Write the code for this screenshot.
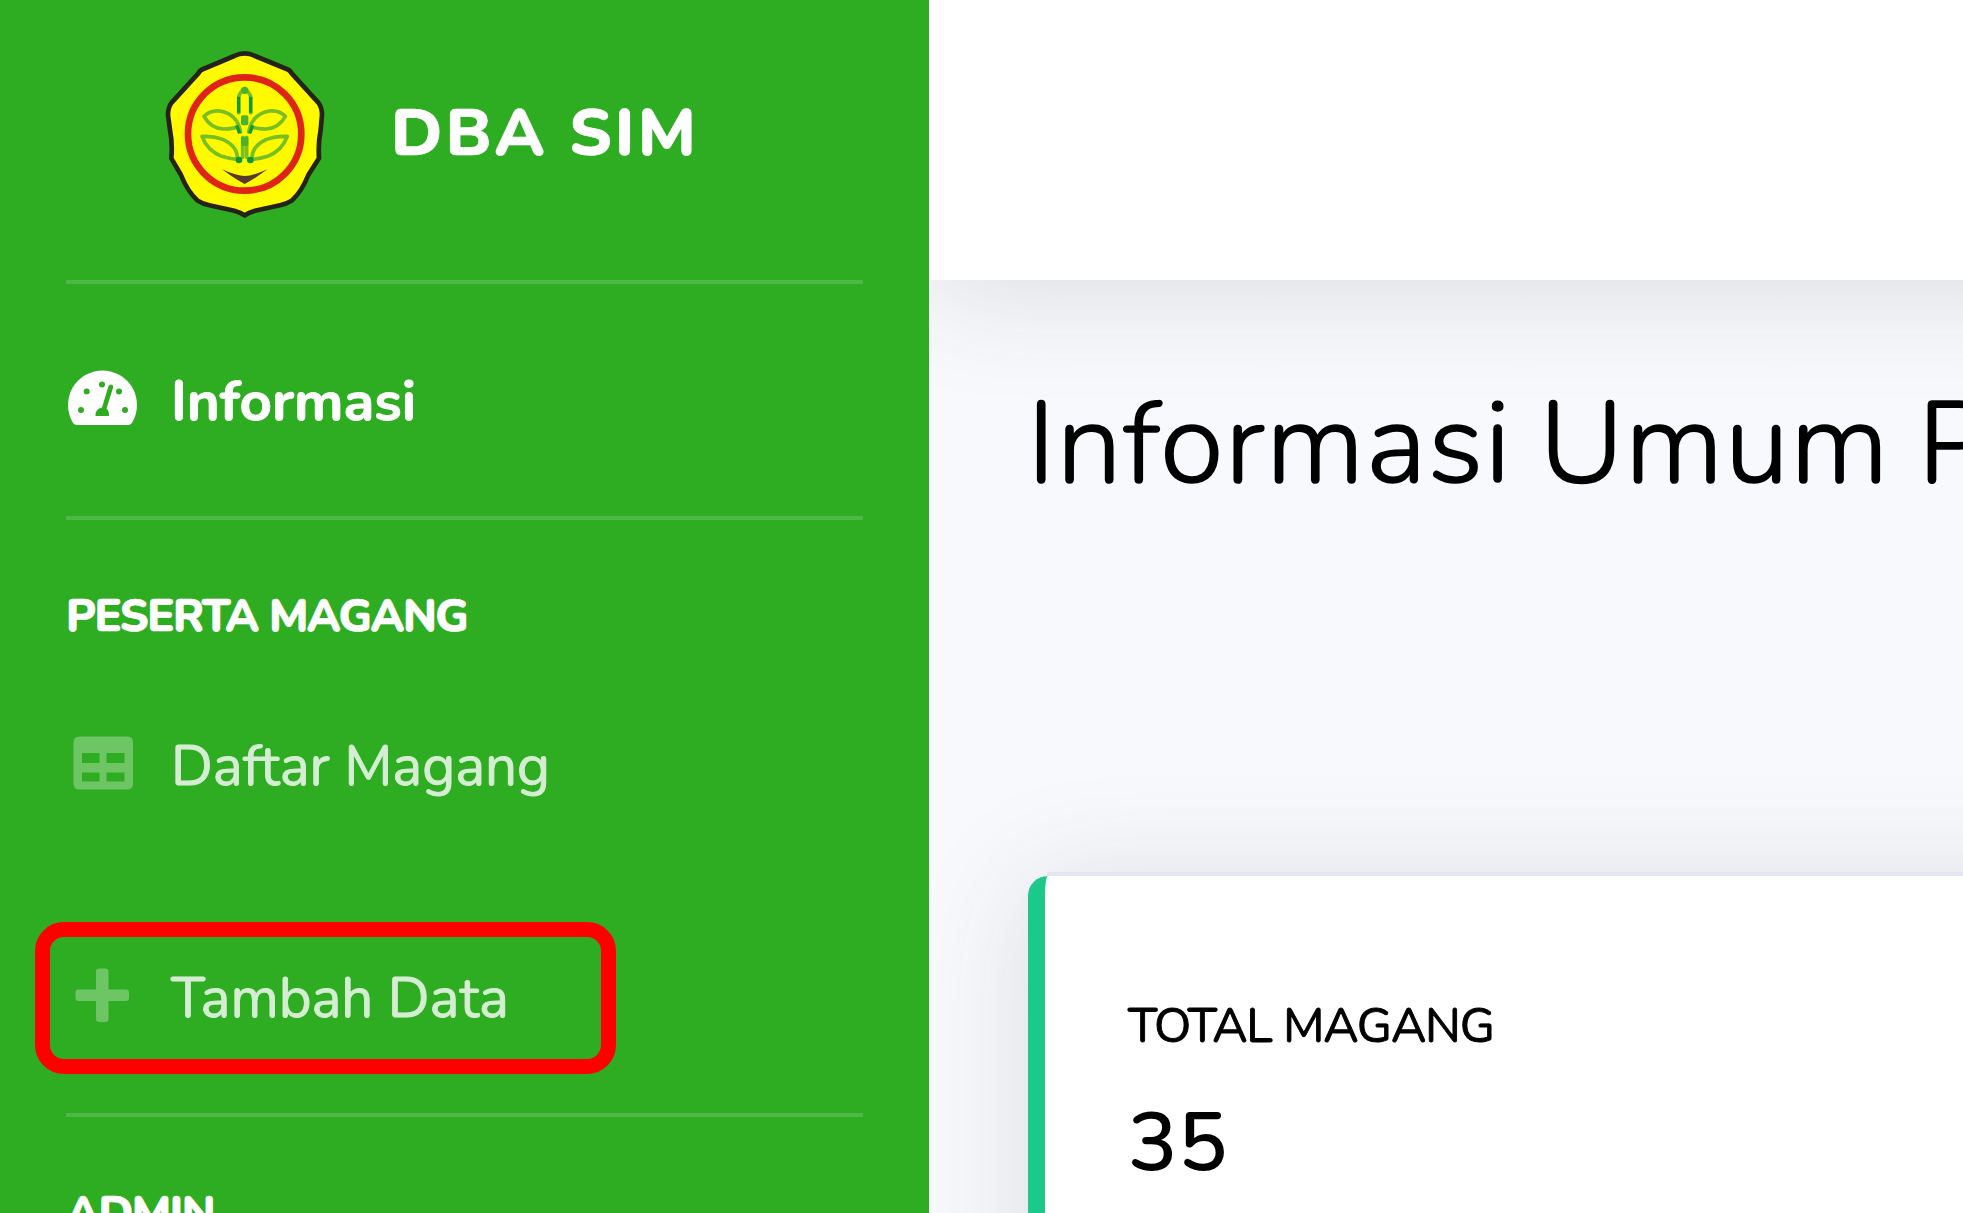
<div class="app">
  <aside class="sidebar">
    <div class="brand">
      <svg class="logo" viewBox="0 0 660 630" aria-hidden="true">
        <path
          d="M314 70 Q330 70 345 78 L440 117 Q450 120 455 130 L535 218 Q546 232 546 255 L542 300 Q534 340 537 385 L505 435 Q485 485 455 512 Q440 522 420 526 L345 542 Q325 548 314 556 Q303 548 283 542 L208 526 Q188 522 173 512 Q143 485 123 435 L94 385 Q98 340 90 300 L84 255 Q84 232 95 218 L175 130 Q180 120 190 117 L283 78 Q298 70 314 70Z"
          fill="#fffa00" stroke="#25221a" stroke-width="14" stroke-linejoin="round" />
        <circle cx="314" cy="312" r="170" fill="none" stroke="#df2417" stroke-width="20" />
        <g fill="none" stroke="#77bf22" stroke-width="11" stroke-linejoin="round" stroke-linecap="round">
          <path d="M296 248 V202 Q297 190 314 176 Q331 190 332 202 V248" />
          <path d="M302 306 Q292 252 240 243 Q210 240 192 259 Q212 295 250 297 Q280 297 292 290" />
          <path d="M326 306 Q336 252 388 243 Q418 240 436 259 Q416 295 378 297 Q348 297 336 290" />
          <path d="M292 388 Q294 350 250 329 Q222 318 186 319 Q202 362 245 379 Q270 387 292 388" />
          <path d="M336 388 Q334 350 378 329 Q406 318 442 319 Q426 362 383 379 Q358 387 336 388" />
          <path d="M308 322 V382 M320 322 V382" />
        </g>
        <g fill="none" stroke="#0f9a3c" stroke-width="10">
          <path d="M296 248 V200 M332 248 V200 M290 286 L299 310 M338 286 L329 310" />
        </g>
        <g fill="#4bb22c">
          <circle cx="314" cy="181" r="11" />
          <rect x="303" y="256" width="22" height="30" rx="6" />
          <rect x="303" y="320" width="22" height="28" rx="6" />
          <circle cx="297" cy="390" r="10" fill="#0b9a35" />
          <circle cx="331" cy="390" r="10" fill="#0b9a35" />
        </g>
        <path d="M246 418 Q290 438 314 438 Q338 438 382 418 Q345 446 314 462 Q283 446 246 418Z" fill="#5b3a2c" />
      </svg>
      <span class="name">DBA SIM</span>
    </div>
    <hr />
    <a class="item active" href="#informasi">
      <svg viewBox="66 368 104 68" aria-hidden="true">
        <path d="M77 425 Q74 425 72.500 422 A34.500 34.500 0 1 1 132.500 422 Q131 425 128 425Z" fill="#fff" />
        <g fill="#2eac22">
          <circle cx="86.700" cy="391.500" r="3" />
          <circle cx="102" cy="384.500" r="3" />
          <circle cx="119" cy="391.500" r="3" />
          <circle cx="81" cy="410" r="3" />
          <circle cx="125" cy="410" r="3" />
          <path d="M95.500 416 Q95 409 102 407.500 L108.500 386 Q110 383.500 112.500 385 Q113.500 386 113 388 L106.500 408.500 Q109.500 411 109 416Z" />
        </g>
      </svg>
      <span>Informasi</span>
    </a>
    <hr />
    <div class="heading">PESERTA MAGANG</div>
    <a class="item" href="#daftar">
      <svg viewBox="66 736 104 61" aria-hidden="true">
        <path
          fill-rule="evenodd"
          fill="rgba(255,255,255,.3)"
          d="M79.500 736.500H127.500Q133 736.500 133 742.500V783.500Q133 789.500 127.500 789.500H79.500Q73.500 789.500 73.500 783.500V742.500Q73.500 736.500 79.500 736.500Z M82 753V763H99.500V753Z M106.500 753V763H124.500V753Z M82 772.500V781.500H99.500V772.500Z M106.500 772.500V781.500H124.500V772.500Z" />
      </svg>
      <span>Daftar Magang</span>
    </a>
    <a class="item add" href="#tambah">
      <svg viewBox="66 966 104 66" aria-hidden="true">
        <path
          fill="rgba(255,255,255,.3)"
          d="M99 968.500H105.500Q108.500 968.500 108.500 971.500V989.500H126Q129 989.500 129 992.500V998Q129 1001 126 1001H108.500V1019Q108.500 1022 105.500 1022H99Q96 1022 96 1019V1001H78.500Q75.500 1001 75.500 998V992.500Q75.500 989.500 78.500 989.500H96V971.500Q96 968.500 99 968.500Z" />
      </svg>
      <span>Tambah Data</span>
      <i class="marker"></i>
    </a>
    <hr />
    <div class="heading">ADMIN</div>
  </aside>

  <main>
    <header></header>
    <h1>Informasi Umum P</h1>
    <section class="card">
      <div class="label">TOTAL MAGANG</div>
      <div class="value">35</div>
    </section>
  </main>
</div>

<style>
  :global(body) {
    overflow: hidden;
  }
  .app {
    display: flex;
    width: 100vw;
    height: 100vh;
    overflow: hidden;
    font-family: Nunito, Lato, sans-serif;
    background: #f8f9fc;
  }
  .sidebar {
    flex: 0 0 929px;
    background: #2eac22;
    color: #fff;
    position: relative;
    z-index: 1;
    overflow: hidden;
  }
  .brand {
    display: flex;
    align-items: flex-start;
    gap: 31px;
    height: 250px;
    padding: 30px 0 0 140px;
  }
  .logo {
    width: 220px;
    height: 210px;
  }
  .name {
    font-size: 66.400px;
    font-weight: 800;
    letter-spacing: 3.100px;
    line-height: 207px;
    -webkit-text-stroke: 0.600px #fff;
  }
  hr {
    height: 4px;
    margin: 0 66px;
    border: 0;
    background: rgba(255, 255, 255, 0.15);
  }
  .item {
    display: flex;
    align-items: center;
    gap: 1px;
    height: 105px;
    padding-left: 66px;
    color: #d5eed3;
    font-size: 56.400px;
    font-weight: 400;
    letter-spacing: -0.050px;
    line-height: 76px;
    text-decoration: none;
    position: relative;
    -webkit-text-stroke: 0.900px currentColor;
  }
  .item svg {
    width: 104px;
    flex: none;
  }
  .item.active {
    height: 228px;
    padding-top: 4px;
    color: #fff;
    font-weight: 700;
  }
  .item.add {
    height: 228px;
    margin-top: 66px;
  }
  .marker {
    position: absolute;
    left: 35px;
    top: 37px;
    box-sizing: border-box;
    width: 581px;
    height: 152px;
    border: 15px solid #f00;
    border-radius: 29px;
  }
  .heading {
    height: 194px;
    padding-left: 66px;
    font-size: 45px;
    font-weight: 800;
    letter-spacing: -1.450px;
    line-height: 194px;
    -webkit-text-stroke: 0.700px #fff;
  }
  main {
    flex: 1;
    min-width: 0;
  }
  header {
    width: 1400px;
    height: 280px;
    background: #fff;
    box-shadow: 0 10px 116px rgba(58, 59, 69, 0.15);
  }
  h1 {
    height: 328px;
    margin: 0 0 268px;
    padding-left: 98px;
    color: #000;
    font-size: 116.100px;
    font-weight: 300;
    letter-spacing: 1.400px;
    word-spacing: -3px;
    line-height: 328px;
    white-space: nowrap;
    -webkit-text-stroke: 1.600px #000;
  }
  .card {
    position: relative;
    width: 1200px;
    height: 500px;
    margin-left: 99px;
    padding: 100px 0 0 83px;
    border-left: 17px solid #1cc88a;
    border-radius: 20px;
    background: #fff;
    box-shadow: 0 8px 116px rgba(58, 59, 69, 0.15);
    color: #000;
  }
  .card::before {
    content: '';
    position: absolute;
    top: -4px;
    left: 2px;
    right: 0;
    height: 4px;
    background: #e3e6f0;
  }
  .label {
    font-size: 48.500px;
    font-weight: 400;
    letter-spacing: -1.150px;
    line-height: 100px;
    -webkit-text-stroke: 0.900px #000;
  }
  .value {
    font-size: 82.500px;
    font-weight: 600;
    line-height: 135px;
    letter-spacing: 0.500px;
  }
</style>
